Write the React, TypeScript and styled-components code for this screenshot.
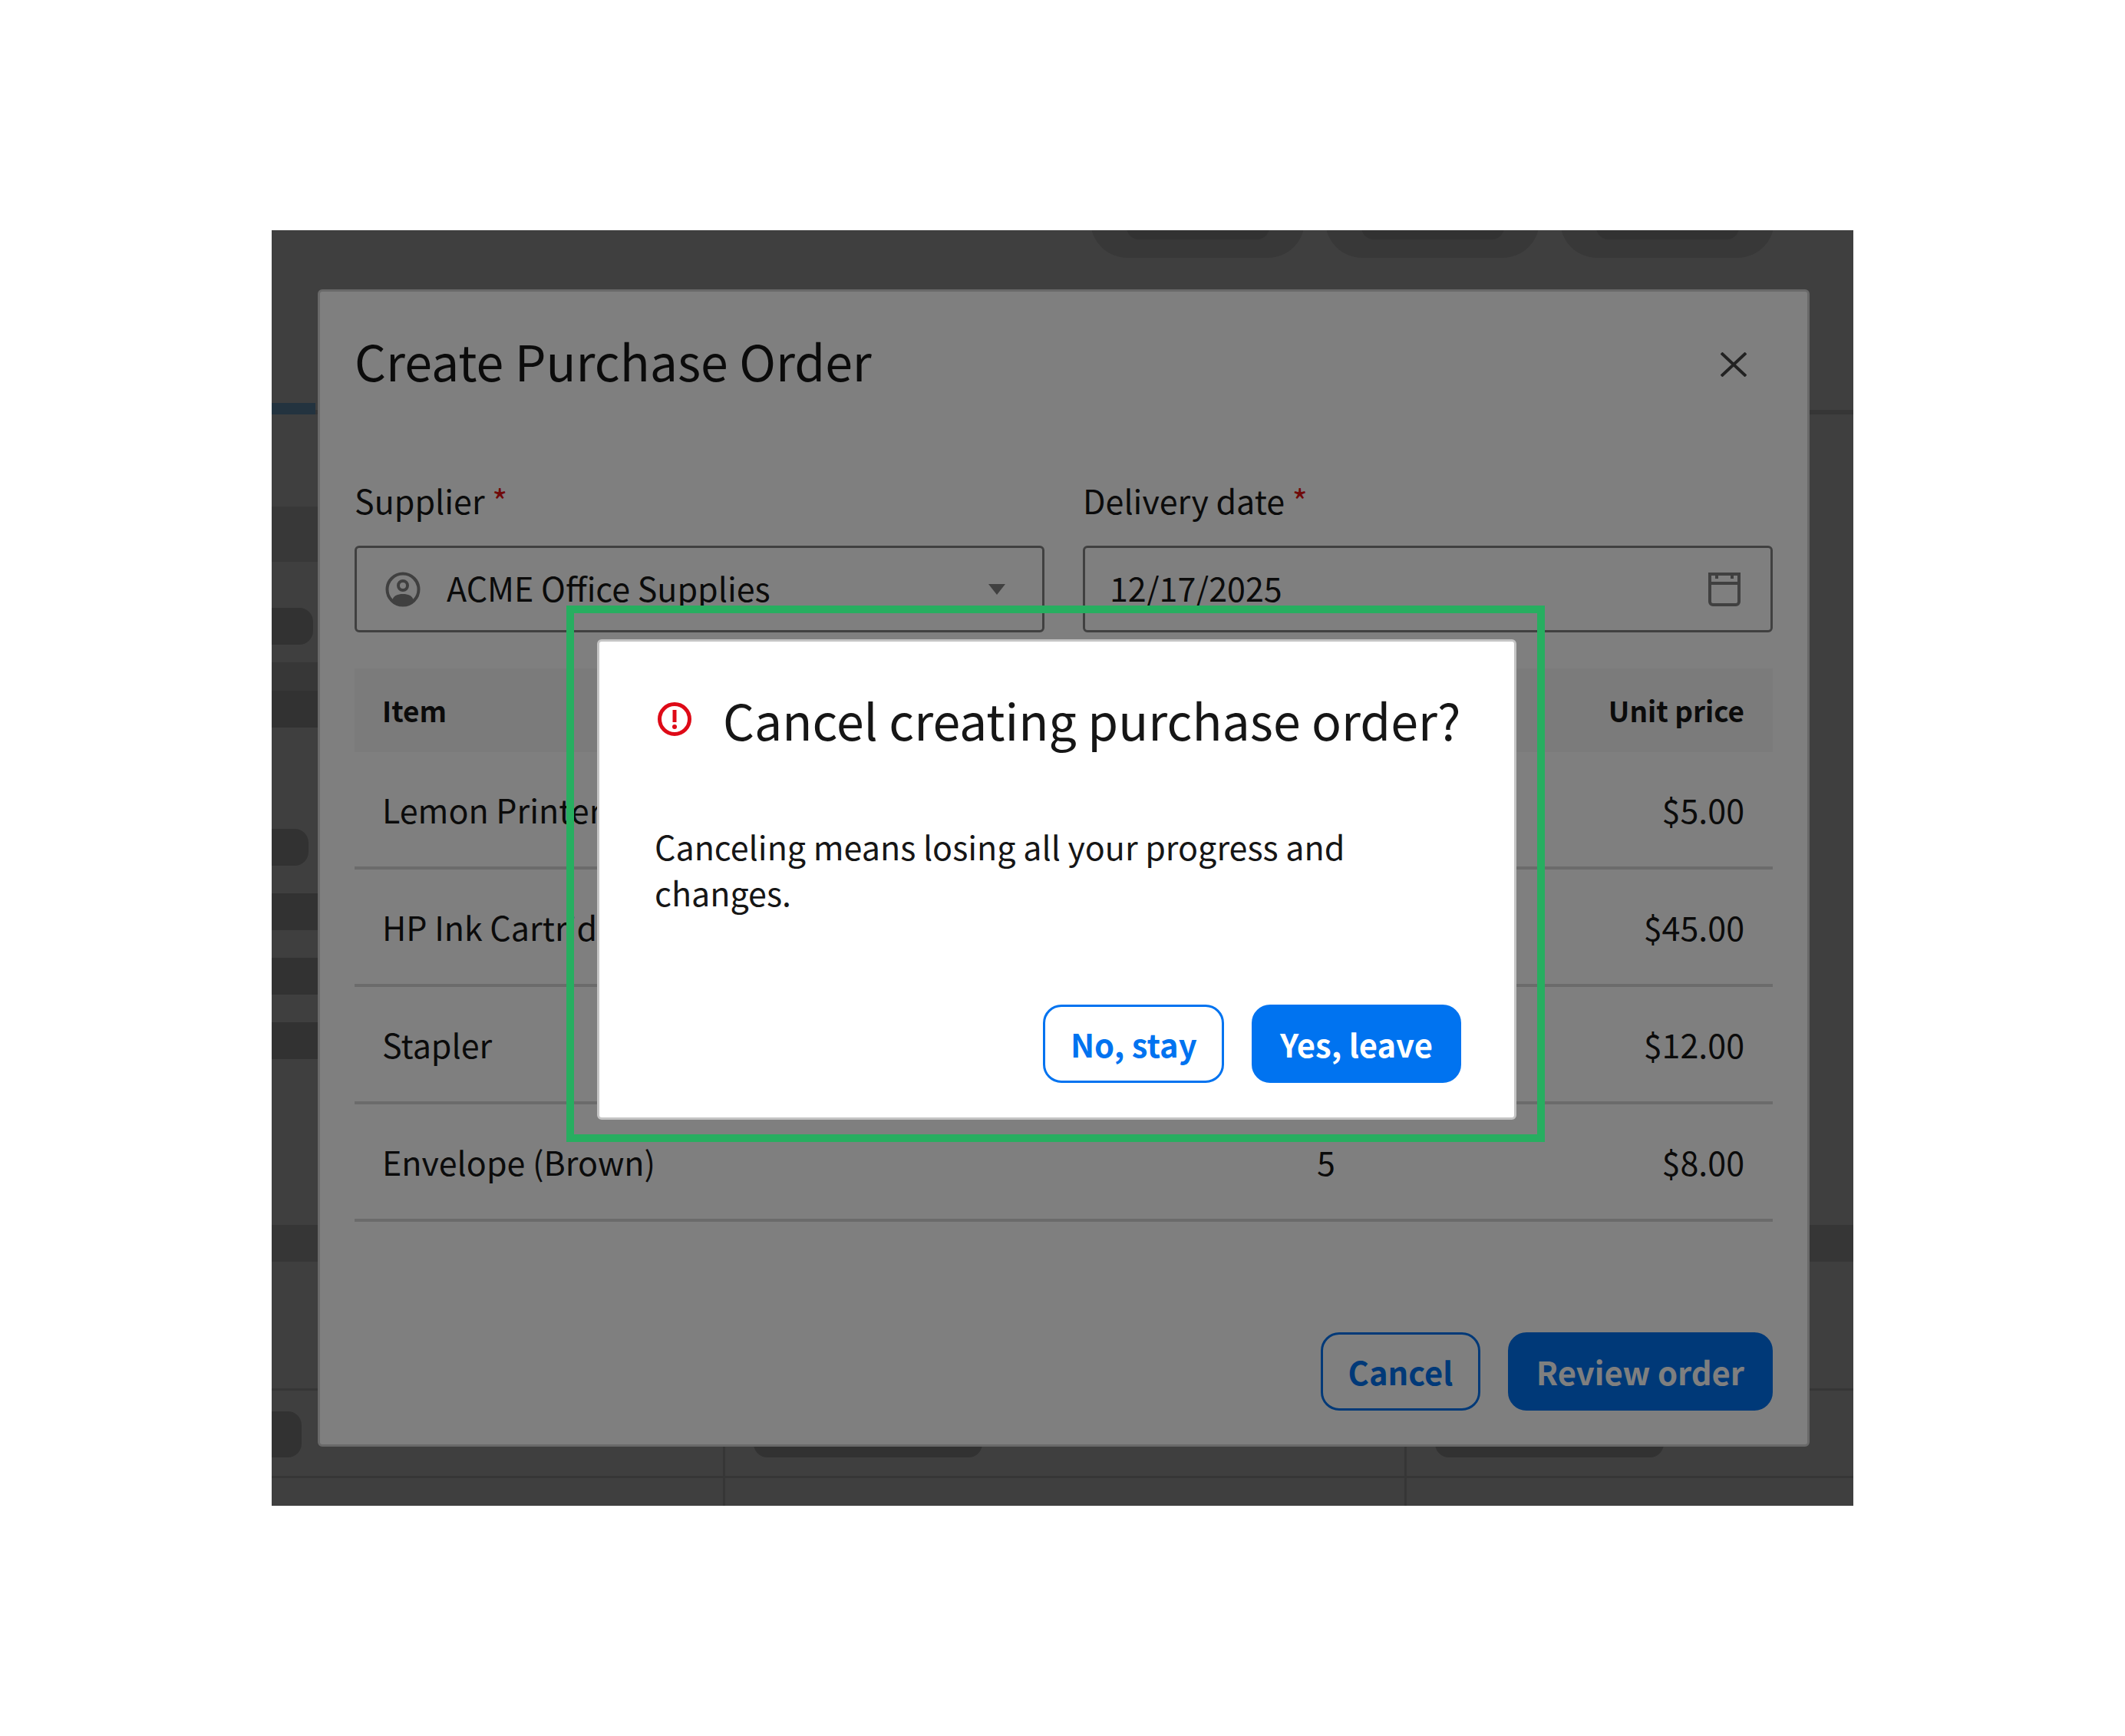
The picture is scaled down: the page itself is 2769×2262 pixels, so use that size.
import React from 'react'
import styled, { createGlobalStyle } from 'styled-components'

const GlobalStyle = createGlobalStyle`
  html, body {
    margin: 0;
    background: #ffffff;
    font-family: "Noto Sans CJK SC", "Noto Sans", sans-serif;
    color: #161616;
  }
  * {
    box-sizing: border-box;
  }
`

const Page = styled.div`
  width: 2769px;
  height: 2262px;
  padding: 300px 354px;
`

const Frame = styled.div`
  position: relative;
  width: 2061px;
  height: 1662px;
  overflow: hidden;
  background: #ffffff;
`

/* page behind the dialogs, only its margins are visible */
const PillRow = styled.div`
  display: flex;
  justify-content: flex-end;
  gap: 27px;
  height: 36px;
  padding-right: 103px;
`

const Pill = styled.div`
  display: flex;
  align-items: center;
  justify-content: center;
  flex: none;
  width: 279px;
  height: 96px;
  margin-top: -60px;
  border-radius: 48px;
  background: #e0e0e0;
`

const PillInner = styled.div`
  width: 186px;
  height: 48px;
  border-radius: 16px;
  background: #c8c8c8;
`

const TabRow = styled.div`
  display: flex;
  align-items: flex-end;
  height: 204px;
  border-bottom: 6px solid #d8d8d8;
`

const ActiveTab = styled.div`
  width: 57px;
  height: 15px;
  margin-bottom: -6px;
  background: rgb(140, 204, 255);
`

const Band = styled.div<{ $gap: number; $height: number; $tone: string; $full?: boolean }>`
  width: ${props => (props.$full ? '100%' : '400px')};
  height: ${props => props.$height}px;
  margin-top: ${props => props.$gap}px;
  background: ${props => props.$tone};
`

const Skeleton = styled.div<{ $gap?: number; $width: number; $height: number }>`
  width: ${props => props.$width}px;
  height: ${props => props.$height}px;
  margin-top: ${props => props.$gap || 0}px;
  border-radius: 0 18px 18px 0;
  background: #c8c8c8;
`

const CellSkeleton = styled.div`
  width: 298px;
  height: 60px;
  border-radius: 18px;
  background: #c8c8c8;
`

const FooterGrid = styled.div`
  display: grid;
  grid-template-columns: 588px 888px 1fr;
  grid-template-rows: 114px 36px;
  margin-top: 165px;
  border-top: 3px solid #d8d8d8;
`

const FooterCell = styled.div<{ $bottom?: boolean }>`
  padding: 27px 0 0 37px;
  border-bottom: ${props => (props.$bottom ? '3px solid #d8d8d8' : 'none')};

  &:not(:nth-child(3n + 1)) {
    border-left: 3px solid #d8d8d8;
  }

  &:nth-child(3n + 1) {
    padding-left: 0;
  }
`

/* layered overlays */
const ModalScrim = styled.div`
  position: absolute;
  inset: 0;
  display: flex;
  padding: 77px 57px 77px 60px;
  background: rgba(0, 0, 0, 0.5);
`

const Modal = styled.section`
  display: flex;
  flex-direction: column;
  flex: 1;
  padding: 0 45px 44px;
  border: 3px solid #d2d2d2;
  border-radius: 6px;
  background: #ffffff;
`

const ModalHeader = styled.header`
  display: flex;
  align-items: center;
  justify-content: space-between;
  height: 190px;
  padding-right: 34px;
`

const ModalTitle = styled.h1`
  margin: 0;
  padding-bottom: 12px;
  font-size: 64.4px;
  font-weight: 400;
  line-height: 80px;
  color: #161616;
`

const FieldGrid = styled.div`
  display: grid;
  grid-template-columns: 899px 899px;
  gap: 50px;
  margin-top: 51px;
`

const Field = styled.div`
  display: flex;
  flex-direction: column;
`

const Label = styled.label`
  height: 60px;
  margin-bottom: 30px;
  font-size: 43px;
  line-height: 60px;
  color: #161616;
`

const Required = styled.span`
  color: #e01414;
`

const Input = styled.div<{ $left: number; $right: number }>`
  display: flex;
  align-items: center;
  height: 113px;
  padding: 0 ${props => props.$right}px 0 ${props => props.$left}px;
  border: 3px solid #808080;
  border-radius: 6px;
  font-size: 43px;
  line-height: 60px;
`

const InputText = styled.span<{ $indent?: number }>`
  flex: 1;
  margin-left: ${props => props.$indent || 0}px;
  padding-bottom: 5px;
`

const Table = styled.div`
  margin-top: 47px;
`

const TableRow = styled.div<{ $head?: boolean }>`
  display: grid;
  grid-template-columns: 1218px 1fr auto;
  align-items: center;
  height: ${props => (props.$head ? 109 : 153)}px;
  padding: 0 37px 2px 36px;
  font-size: ${props => (props.$head ? 36.9 : 43)}px;
  font-weight: ${props => (props.$head ? 600 : 400)};
  background: ${props => (props.$head ? '#f6f6f6' : 'transparent')};
  border-bottom: ${props => (props.$head ? 'none' : '4px solid #d6d6d6')};
`

const ModalFooter = styled.footer`
  display: flex;
  justify-content: flex-end;
  gap: 36px;
  margin-top: auto;
`

const OutlineButton = styled.button`
  height: 102px;
  padding: 0 32.5px;
  border: 3px solid #0073f0;
  border-radius: 24px;
  background: #ffffff;
  color: #0073f0;
  font-family: inherit;
  font-size: 41.7px;
  font-weight: 600;
`

const FilledButton = styled(OutlineButton)`
  padding: 0 34px;
  background: #0073f0;
  color: #ffffff;
`

const DialogScrim = styled.div`
  position: absolute;
  inset: 0;
  display: flex;
  align-items: flex-start;
  padding: 489px 0 0 384px;
  background: rgba(0, 0, 0, 0.5);
`

const Highlight = styled.div`
  padding: 34px 27px 19px 30px;
  border: 10px solid #27ae60;
`

const Dialog = styled.div`
  display: flex;
  flex-direction: column;
  width: 1198px;
  height: 626px;
  padding: 61px 69px 45px 72px;
  border: 3px solid #c4c4c4;
  border-radius: 6px;
  background: #ffffff;
`

const DialogHeader = styled.div`
  display: flex;
  align-items: center;
  gap: 41px;
`

const DialogTitle = styled.h2`
  margin: 0;
  font-size: 64.4px;
  font-weight: 400;
  line-height: 80px;
  white-space: nowrap;
`

const DialogBody = styled.p`
  margin: 95px 0 0;
  width: 960px;
  font-size: 43px;
  line-height: 60px;
`

const AlertSvg = styled.svg`
  flex: none;
  margin-left: 4px;
`

const rows = [
  { item: 'Lemon Printer', qty: '', price: '$5.00' },
  { item: 'HP Ink Cartridge', qty: '', price: '$45.00' },
  { item: 'Stapler', qty: '', price: '$12.00' },
  { item: 'Envelope (Brown)', qty: '5', price: '$8.00' },
]

const UserIcon = () => (
  <svg width="46" height="46" viewBox="0 0 46 46" fill="none">
    <circle cx="23" cy="23" r="20.5" stroke="#808080" strokeWidth="4" />
    <circle cx="23" cy="18" r="6" stroke="#808080" strokeWidth="4" />
    <path d="M9 37c2-6 7-8 14-8s12 2 14 8c-4 4-9 6-14 6s-10-2-14-6z" fill="#808080" />
  </svg>
)

const CaretIcon = () => (
  <svg width="22" height="14" viewBox="0 0 22 14">
    <path d="M0 0h22L11 14z" fill="#808080" />
  </svg>
)

const CalendarIcon = () => (
  <svg width="42" height="44" viewBox="0 0 42 44" fill="none" stroke="#808080" strokeWidth="4">
    <path d="M2 2h38v36a4 4 0 0 1-4 4H6a4 4 0 0 1-4-4z" />
    <path d="M2 14h38M11 2v6M31 2v6" />
  </svg>
)

const CloseIcon = () => (
  <svg width="34" height="32" viewBox="0 0 34 32" fill="none" stroke="#444444" strokeWidth="4">
    <path d="M1 1l32 30M33 1L1 31" />
  </svg>
)

const AlertIcon = () => (
  <AlertSvg width="44" height="44" viewBox="0 0 44 44" fill="none">
    <circle cx="22" cy="22" r="19.5" stroke="#de0a17" strokeWidth="5" />
    <path d="M22 10v16" stroke="#de0a17" strokeWidth="5" />
    <circle cx="22" cy="32" r="3" fill="#de0a17" />
  </AlertSvg>
)

const App: React.FC = () => {
  return (
    <Page>
      <GlobalStyle />
      <Frame>
        <PillRow>
          <Pill><PillInner /></Pill>
          <Pill><PillInner /></Pill>
          <Pill><PillInner /></Pill>
        </PillRow>
        <TabRow>
          <ActiveTab />
        </TabRow>
        <Band $gap={120} $height={72} $tone="#e0e0e0" />
        <Skeleton $gap={60} $width={54} $height={48} />
        <Band $gap={23} $height={37} $tone="#dcdcdc" />
        <Band $gap={0} $height={48} $tone="#c8c8c8" />
        <Skeleton $gap={132} $width={48} $height={48} />
        <Band $gap={36} $height={48} $tone="#c8c8c8" />
        <Band $gap={36} $height={48} $tone="#c8c8c8" />
        <Band $gap={36} $height={48} $tone="#c8c8c8" />
        <Band $gap={216} $height={48} $tone="#d8d8d8" $full />
        <FooterGrid>
          <FooterCell $bottom><Skeleton $width={39} $height={60} /></FooterCell>
          <FooterCell $bottom><CellSkeleton /></FooterCell>
          <FooterCell $bottom><CellSkeleton /></FooterCell>
          <FooterCell />
          <FooterCell />
          <FooterCell />
        </FooterGrid>

        <ModalScrim>
          <Modal>
            <ModalHeader>
              <ModalTitle>Create Purchase Order</ModalTitle>
              <CloseIcon />
            </ModalHeader>
            <FieldGrid>
              <Field>
                <Label>Supplier<Required> *</Required></Label>
                <Input $left={37} $right={48}>
                  <UserIcon />
                  <InputText $indent={34}>ACME Office Supplies</InputText>
                  <CaretIcon />
                </Input>
              </Field>
              <Field>
                <Label>Delivery date<Required> *</Required></Label>
                <Input $left={32} $right={39}>
                  <InputText>12/17/2025</InputText>
                  <CalendarIcon />
                </Input>
              </Field>
            </FieldGrid>
            <Table>
              <TableRow $head>
                <span>Item</span>
                <span />
                <span>Unit price</span>
              </TableRow>
              {rows.map(row => (
                <TableRow key={row.item}>
                  <span>{row.item}</span>
                  <span>{row.qty}</span>
                  <span>{row.price}</span>
                </TableRow>
              ))}
            </Table>
            <ModalFooter>
              <OutlineButton>Cancel</OutlineButton>
              <FilledButton>Review order</FilledButton>
            </ModalFooter>
          </Modal>
        </ModalScrim>

        <DialogScrim>
          <Highlight>
            <Dialog>
              <DialogHeader>
                <AlertIcon />
                <DialogTitle>Cancel creating purchase order?</DialogTitle>
              </DialogHeader>
              <DialogBody>Canceling means losing all your progress and changes.</DialogBody>
              <ModalFooter>
                <OutlineButton>No, stay</OutlineButton>
                <FilledButton>Yes, leave</FilledButton>
              </ModalFooter>
            </Dialog>
          </Highlight>
        </DialogScrim>
      </Frame>
    </Page>
  )
}

export default App
